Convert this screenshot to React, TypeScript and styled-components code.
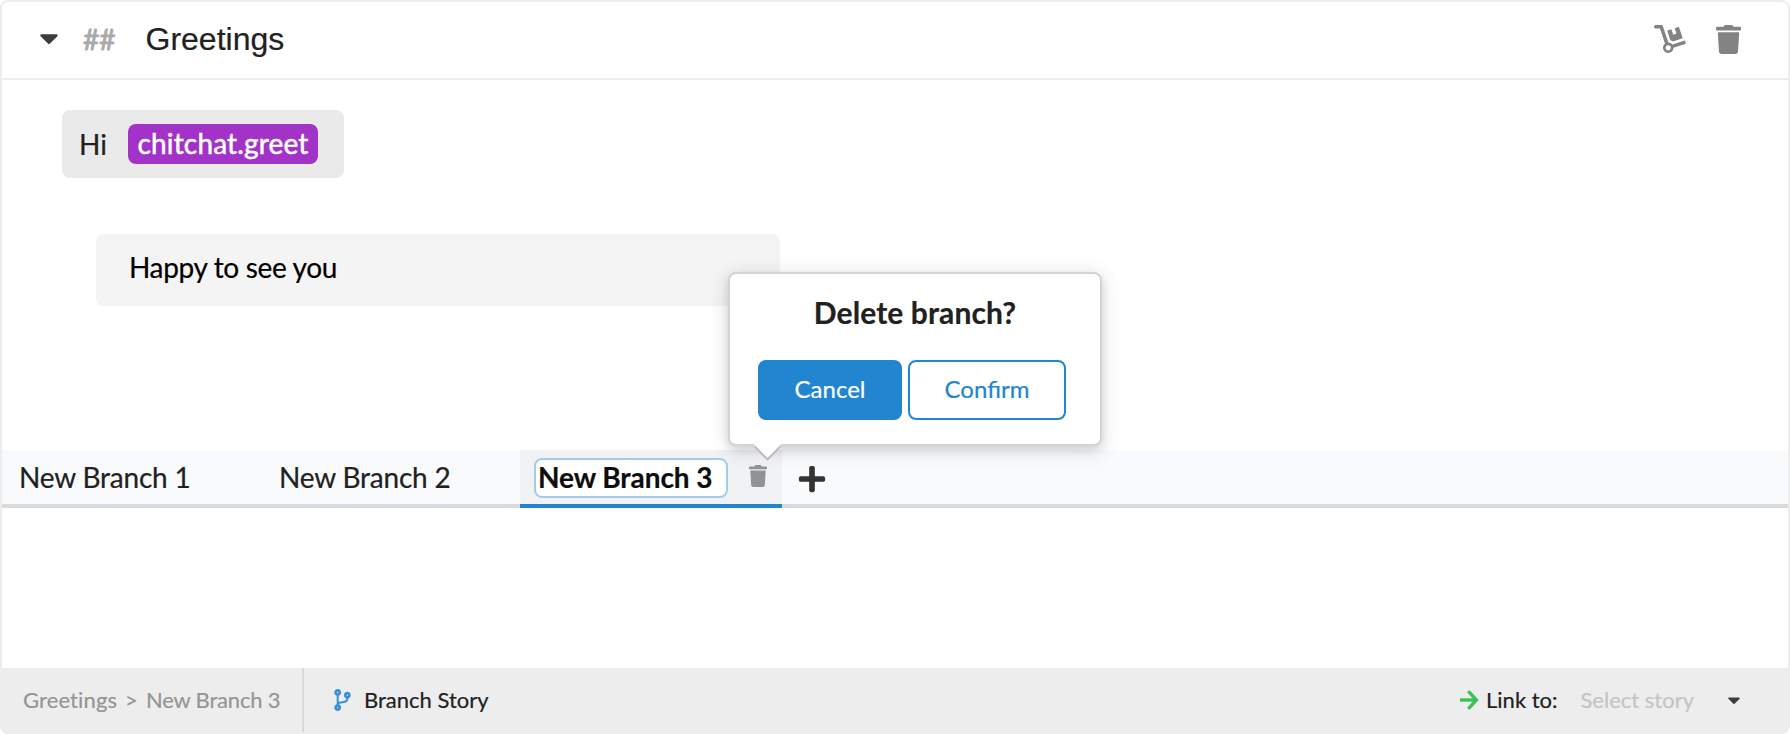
import React from "react";
import styled, { createGlobalStyle } from "styled-components";
import { FaCaretDown, FaCodeBranch, FaDolly, FaPlus } from "react-icons/fa";

const GlobalStyle = createGlobalStyle`
  *, *::before, *::after { box-sizing: border-box; }
  body { margin: 0; background: #fff; }
  button, input { font: inherit; letter-spacing: inherit; margin: 0; }
`;

const Card = styled.main`
  width: 1790px;
  height: 734px;
  display: flex;
  flex-direction: column;
  border: 2px solid #ededed;
  border-radius: 8px;
  overflow: hidden;
  background: #fff;
  color: #212121;
  font-family: Lato, "Liberation Sans", sans-serif;
  font-size: 28px;
  line-height: 40px;
  -webkit-text-stroke: 0.2px currentColor;
`;

const Header = styled.header`
  flex: none;
  height: 78px;
  display: flex;
  align-items: center;
  padding: 0 47px 2px 32px;
  border-bottom: 2px solid #ededed;
`;

const Caret = styled(FaCaretDown)<{ $size: number; $raise?: number }>`
  flex: none;
  width: ${(p) => p.$size}px;
  height: ${(p) => p.$size}px;
  margin-bottom: ${(p) => p.$raise ?? 0}px;
  color: #3c3c3c;
`;

const Hashes = styled.span`
  margin-left: 19px;
  color: #a9a9a9;
  -webkit-text-stroke-width: 0.9px;
`;

const Title = styled.h1`
  flex: 1;
  margin: 0 0 0 30px;
  font: 400 32px/40px "Liberation Sans", Arial, sans-serif;
`;

const HeaderActions = styled.div`
  display: flex;
  align-items: center;
  gap: 30px;
  color: #838383;
`;

const DollyIcon = styled(FaDolly)`
  width: 32px;
  height: 28px;
`;

const TrashSvg = styled.svg<{ $w: number; $h: number }>`
  display: block;
  width: ${(p) => p.$w}px;
  height: ${(p) => p.$h}px;
`;

const Conversation = styled.section`
  flex: none;
  height: 370px;
  padding: 30px 60px 0;
`;

const UserMessage = styled.div`
  width: 282px;
  height: 68px;
  display: flex;
  align-items: center;
  justify-content: space-between;
  padding: 0 26px 0 17px;
  border-radius: 8px;
  background: #eaeaea;
`;

const Intent = styled.span`
  width: 190px;
  height: 40px;
  line-height: 39px;
  text-align: center;
  letter-spacing: 0.15px;
  border-radius: 8px;
  background: #a333c8;
  color: #fff;
  -webkit-text-stroke-width: 0.5px;
`;

const BotMessage = styled.div`
  width: 684px;
  height: 72px;
  margin: 56px 0 0 34px;
  padding: 13px 33px;
  letter-spacing: -0.35px;
  border-radius: 8px;
  background: #f4f4f4;
  color: #000;
`;

const Tabs = styled.nav`
  flex: none;
  height: 58px;
  display: flex;
  background: #f9fafb;
  letter-spacing: -0.2px;
  border-bottom: 4px solid #d9dadb;
`;

const Tab = styled.div<{ $width: number; $active?: boolean }>`
  position: relative;
  width: ${(p) => p.$width}px;
  height: 58px;
  display: flex;
  align-items: center;
  padding: ${(p) => (p.$active ? "2px 0 0 14px" : "0 0 0 17px")};
  background: ${(p) => (p.$active ? "#f1f2f3" : "transparent")};
  border-bottom: 4px solid ${(p) => (p.$active ? "#2185d0" : "transparent")};
`;

const BranchName = styled.input`
  width: 194px;
  height: 40px;
  padding: 0 2px 2px;
  border: 2px solid #a3cced;
  border-radius: 8px;
  outline: none;
  background: #fff;
  color: #0d0d0d;
  font-weight: 700;
  letter-spacing: -0.08px;
`;

const IconButton = styled.button`
  display: flex;
  align-items: center;
  justify-content: center;
  padding: 0;
  border: 0;
  background: none;
  color: inherit;
`;

const DeleteBranch = styled(IconButton)`
  margin: 0 0 4px 21px;
  color: #919293;
`;

const AddBranch = styled(IconButton)`
  width: 59px;
  height: 58px;
  color: #333;
`;

const Popup = styled.div`
  position: absolute;
  z-index: 1;
  left: 208px;
  bottom: 58px;
  width: 374px;
  height: 174px;
  padding: 19px 28px;
  border: 2px solid #d4d4d5;
  border-radius: 8px;
  background: #fff;
  letter-spacing: normal;
  box-shadow: 0 4px 8px rgba(34, 36, 38, 0.12), 0 4px 20px rgba(34, 36, 38, 0.15);

  &::before {
    content: "";
    position: absolute;
    left: 28px;
    bottom: -10px;
    width: 19px;
    height: 19px;
    transform: rotate(45deg);
    background: #fff;
    box-shadow: 2px 2px 0 #bababc;
  }
`;

const PopupTitle = styled.h2`
  margin: 0;
  text-align: center;
  font-size: 30px;
  font-weight: 700;
  line-height: 38px;
  letter-spacing: 0.1px;
`;

const PopupActions = styled.div`
  position: relative;
  display: flex;
  gap: 6px;
  margin-top: 29px;
`;

const PopupButton = styled.button<{ $primary?: boolean }>`
  width: ${(p) => (p.$primary ? 144 : 158)}px;
  height: 60px;
  padding: 0 0 2px;
  border: 2px solid #2185d0;
  border-radius: 8px;
  background: ${(p) => (p.$primary ? "#2185d0" : "#fff")};
  color: ${(p) => (p.$primary ? "#fff" : "#2185d0")};
  font-size: 24px;
`;

const Body = styled.div`
  flex: 1;
`;

const Footer = styled.footer`
  flex: none;
  height: 64px;
  display: flex;
  align-items: center;
  padding-bottom: 1px;
  background: #ededed;
  font-size: 22px;
`;

const Breadcrumb = styled.div`
  width: 302px;
  height: 64px;
  display: flex;
  align-items: center;
  gap: 8px;
  padding-left: 21px;
  border-right: 2px solid #dadada;
  color: #959595;
  white-space: nowrap;
`;

const Crumb = styled.span<{ $tracking: number }>`
  letter-spacing: ${(p) => p.$tracking}px;
`;

const BranchStory = styled.div`
  flex: 1;
  display: flex;
  align-items: center;
  gap: 13px;
  padding-left: 30px;
`;

const BranchIcon = styled(FaCodeBranch)`
  width: 17px;
  height: 22px;
  color: #3b8fd6;
`;

const LinkTo = styled.div`
  display: flex;
  align-items: center;
  padding-right: 44px;
`;

const Arrow = styled.svg`
  width: 19px;
  height: 20px;
  margin-right: 7px;
`;

const SelectStory = styled.span`
  margin: 0 30px 0 23px;
  color: #c4c4c4;
`;

const Trash = ({ w, h }: { w: number; h: number }) => (
  <TrashSvg $w={w} $h={h} viewBox="0 0 448 512" preserveAspectRatio="none" fill="currentColor">
    <path d="M0 84V56c0-13.3 10.7-24 24-24h112l9.4-18.7c4-8.2 12.3-13.3 21.4-13.3h114.3c9.1 0 17.4 5.1 21.5 13.3L312 32h112c13.3 0 24 10.7 24 24v28c0 6.6-5.4 12-12 12H12C5.4 96 0 90.6 0 84zm415.2 56.7L394.8 467c-1.6 25.3-22.6 45-47.9 45H101.1c-25.3 0-46.3-19.7-47.9-45L32.8 140.7c-.4-6.9 5.1-12.7 12-12.7h358.5c6.8 0 12.3 5.8 11.9 12.7z" />
  </TrashSvg>
);

export default function App() {
  return (
    <>
      <GlobalStyle />
      <Card>
        <Header>
          <Caret $size={30} $raise={2} />
          <Hashes>##</Hashes>
          <Title>Greetings</Title>
          <HeaderActions>
            <IconButton aria-label="Move story"><DollyIcon /></IconButton>
            <IconButton aria-label="Delete story"><Trash w={25} h={29} /></IconButton>
          </HeaderActions>
        </Header>

        <Conversation>
          <UserMessage>
            Hi<Intent>chitchat.greet</Intent>
          </UserMessage>
          <BotMessage>Happy to see you</BotMessage>
        </Conversation>

        <Tabs>
          <Tab $width={260}>New Branch 1</Tab>
          <Tab $width={258}>New Branch 2</Tab>
          <Tab $width={262} $active>
            <BranchName defaultValue="New Branch 3" aria-label="Branch name" />
            <DeleteBranch aria-label="Delete branch"><Trash w={18} h={22} /></DeleteBranch>
            <Popup role="dialog">
              <PopupTitle>Delete branch?</PopupTitle>
              <PopupActions>
                <PopupButton $primary>Cancel</PopupButton>
                <PopupButton>Confirm</PopupButton>
              </PopupActions>
            </Popup>
          </Tab>
          <AddBranch aria-label="Add branch"><FaPlus size={30} /></AddBranch>
        </Tabs>

        <Body />

        <Footer>
          <Breadcrumb>
            <Crumb $tracking={0.12}>Greetings</Crumb>
            <span>&gt;</span>
            <Crumb $tracking={-0.18}>New Branch 3</Crumb>
          </Breadcrumb>
          <BranchStory>
            <BranchIcon />
            Branch Story
          </BranchStory>
          <LinkTo>
            <Arrow viewBox="0 0 19 20" fill="none" stroke="#3fc056" strokeWidth="3.4">
              <path d="M0 10H16" />
              <path d="M9.2 2.2L16.4 10L9.2 17.8" strokeLinecap="round" />
            </Arrow>
            Link to:
            <SelectStory>Select story</SelectStory>
            <Caret $size={20} />
          </LinkTo>
        </Footer>
      </Card>
    </>
  );
}
